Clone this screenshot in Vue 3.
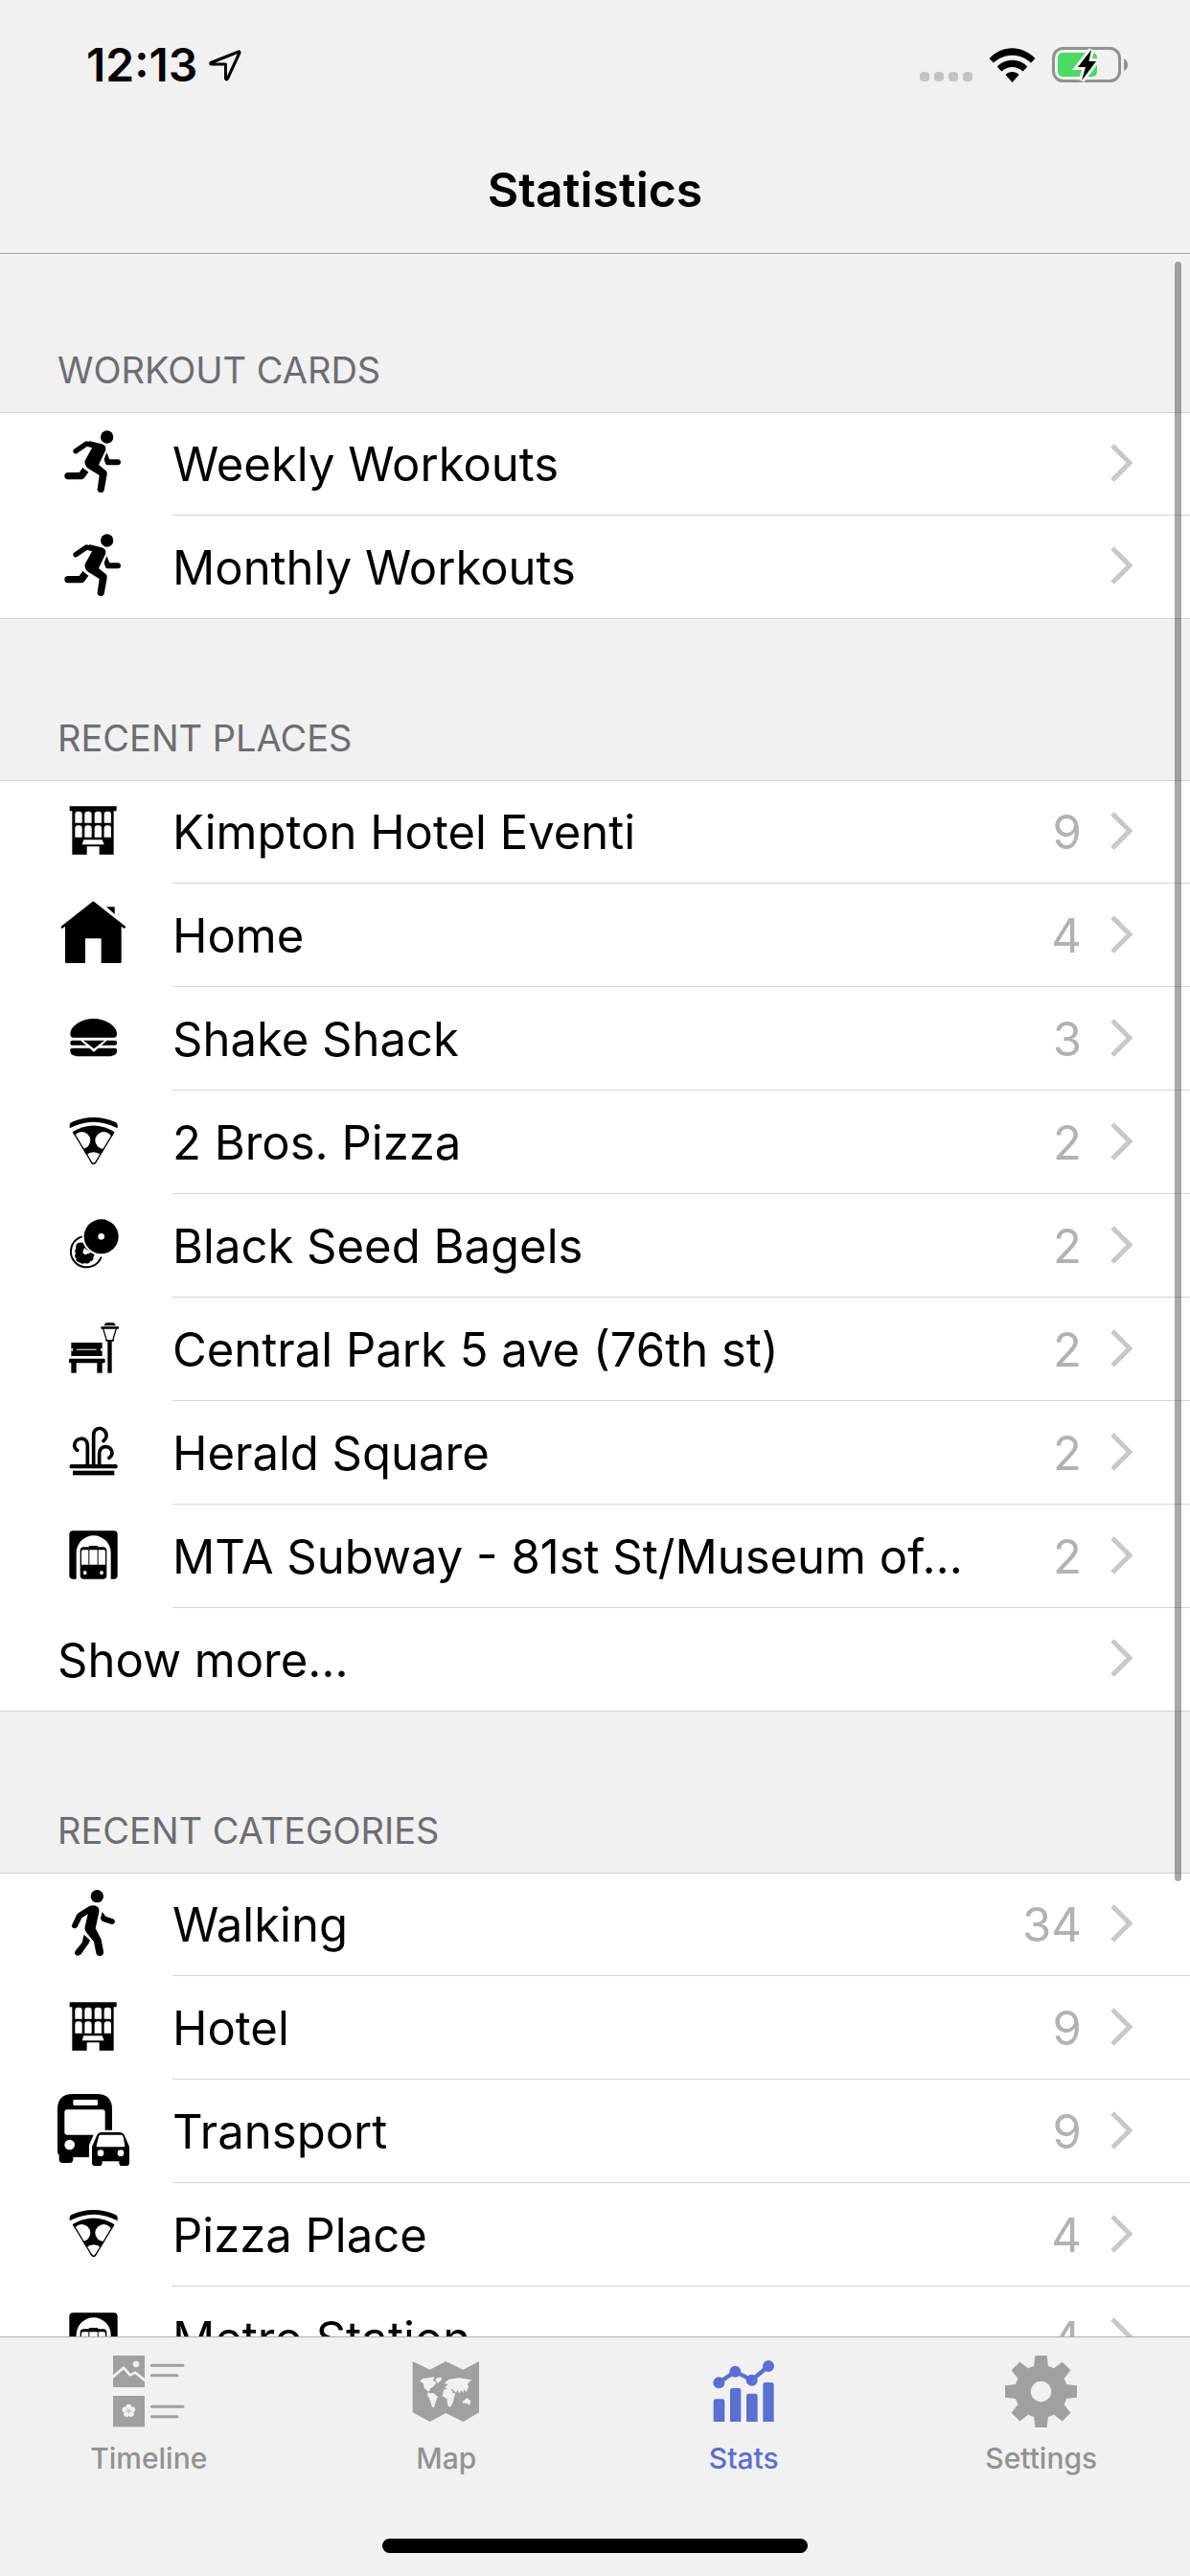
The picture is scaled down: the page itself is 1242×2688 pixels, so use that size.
<script setup>
import { h } from 'vue'

const sections = [
  {
    title: 'Workout Cards',
    rows: [
      { icon: 'run', label: 'Weekly Workouts' },
      { icon: 'run', label: 'Monthly Workouts' },
    ],
  },
  {
    title: 'Recent Places',
    rows: [
      { icon: 'hotel', label: 'Kimpton Hotel Eventi', count: 9 },
      { icon: 'home', label: 'Home', count: 4 },
      { icon: 'burger', label: 'Shake Shack', count: 3 },
      { icon: 'pizza', label: '2 Bros. Pizza', count: 2 },
      { icon: 'bagel', label: 'Black Seed Bagels', count: 2 },
      { icon: 'park', label: 'Central Park 5 ave (76th st)', count: 2 },
      { icon: 'fountain', label: 'Herald Square', count: 2 },
      { icon: 'metro', label: 'MTA Subway - 81st St/Museum of…', count: 2 },
      { label: 'Show more…' },
    ],
  },
  {
    title: 'Recent Categories',
    rows: [
      { icon: 'walk', label: 'Walking', count: 34 },
      { icon: 'hotel', label: 'Hotel', count: 9 },
      { icon: 'transport', label: 'Transport', count: 9 },
      { icon: 'pizza', label: 'Pizza Place', count: 4 },
      { icon: 'metro', label: 'Metro Station', count: 4 },
    ],
  },
]

const tabs = [
  { icon: 'timeline', label: 'Timeline' },
  { icon: 'map', label: 'Map' },
  { icon: 'stats', label: 'Stats', active: true },
  { icon: 'settings', label: 'Settings' },
]

// Shape helpers: k = solid, w = cut-out, s = stroked line, c = circle, r = rectangle
const k = (d) => h('path', { d })
const w = (d, fill = '#fff') => h('path', { d, fill })
const s = (d, width, stroke = 'currentColor', cap = 'round') =>
  h('path', { d, fill: 'none', stroke, 'stroke-width': width, 'stroke-linecap': cap, 'stroke-linejoin': 'round' })
const c = (cx, cy, r, fill = 'currentColor') => h('circle', { cx, cy, r, fill })
const r = (x, y, width, height, rx = 0, fill = 'currentColor') => h('rect', { x, y, width, height, rx, fill })

const bar = '#f1f1f1'
const archWindow = (x, y, height) => w(`M${x} ${y + height}v${9 - height}q0 -9 9 -9h4q9 0 9 9v${height - 9}z`)

const glyphs = {
  run: () => [
    c(155, 33, 20),
    s('M57 77L91 54L130 64', 16),
    k('M98 45L138 55Q155 60 150 76L129 120L152 139Q156 143 155 150L146 200Q144 208 134 207Q124 205 125 196L131 153L97 132Q83 122 86 107L109 65Z'),
    k('M33 144H68L79 129L97 143L84 161Q80 166 74 166H33Q22 165 22 155Q22 144 33 144Z'),
    k('M154 82L163 103H189Q198 104 198 112Q198 121 189 121H158Q151 121 149 113L146 102Z'),
  ],
  walk: () => [
    c(124, 29, 20),
    k('M45 120L59 89Q61 84 66 81L96 62Q102 58 113 58Q133 60 130 79L119 130L134 158Q137 163 138 170L144 202Q145 215 134 216Q123 217 121 207L114 172L91 143Q84 135 86 125L95 85L76 97L62 125Q57 131 50 129Q43 126 45 120Z'),
    k('M83 149L102 167Q98 178 93 183L74 210Q66 218 58 214Q51 208 56 200L77 174Z'),
    k('M140 78L151 92L174 100Q183 106 178 113Q175 118 167 116L144 109Q136 107 135 98Z'),
  ],
  hotel: () => [
    k('M38 37H185V52H176V188H131V163H92V188H46V52H38Z'),
    ...[55, 85, 116, 146].flatMap((x) => [archWindow(x, 53, 36), archWindow(x, 97, 37)]),
    w('M82 142H140L146 157H77Z'),
  ],
  home: () => [
    k('M112 10L214 90L210 96L200 89V201Q200 204 197 204H137V127H87V204H27Q24 204 24 201V89L14 96L10 90Z'),
    k('M153 28H179V51Z'),
  ],
  burger: () => [
    k('M113 54C150 54 186 76 186 102Q186 113 176 113H50Q40 113 40 102C40 76 76 54 113 54Z'),
    r(40, 122, 146, 15, 6),
    k('M40 151Q40 146 46 146H180Q186 146 186 151V158Q184 172 150 172H76Q42 172 40 158Z'),
    w('M73 120H154V123L114 158L73 123Z'),
    k('M81 122H147L114 148Z'),
  ],
  pizza: () => [
    k('M47 84Q113 45 178 84L121 180Q113 192 105 180Z'),
    c(76, 111, 27, '#fff'),
    c(145, 111, 27, '#fff'),
    w('M88 158Q113 138 138 158L114 183H112Z'),
    s('M50 86L107 180Q113 188 119 180L176 86', 4),
    k('M38 63Q38 57 44 54Q113 24 182 54Q188 57 188 63V73Q113 34 38 73Z'),
  ],
  bagel: () => [
    c(88, 137, 49, '#fff'),
    s('M90 86A49 49 0 1 0 136 154', 6),
    k('M64 108Q77 104 86 111L112 139Q120 143 112 152Q114 164 103 165Q98 176 86 171Q76 176 69 169Q57 168 58 156Q51 149 57 140Q52 132 58 125Q56 113 64 108Z'),
    w('M84 123L95 132L103 137L98 142Q93 140 89 145Q81 144 79 137Z'),
    c(137, 88, 60, '#fff'),
    c(137, 88, 54),
    c(137, 88, 10, '#fff'),
  ],
  park: () => [
    r(43, 96, 97, 42, 1),
    w('M43 114H48V122H43ZM59 116H122V119H59ZM135 114H140V122H135Z'),
    r(36, 146, 113, 14, 4),
    r(43, 158, 16, 33),
    r(124, 158, 16, 33),
    r(157, 90, 13, 101),
    r(151, 87, 26, 5),
    s('M143 52L153 86M184 52L174 86', 4),
    r(136, 46, 56, 7, 2),
    k('M153 34H175Q178 34 181 40L182 43H146L147 40Q150 34 153 34Z'),
  ],
  fountain: () => [
    s('M113 158V62C113 30 155 36 153 65Q152 73 144 80', 11),
    s('M94 158V93C94 64 53 67 53 95Q54 104 62 109', 11),
    s('M131 158V120C131 90 171 91 171 119Q170 127 162 133', 11),
    r(38, 153, 150, 13, 5),
    r(48, 173, 130, 14),
  ],
  metro: () => [
    r(37, 37, 151, 151, 12),
    w('M59 190V106A54 54 0 0 1 167 106V190Z'),
    r(71, 88, 83, 100, 11),
    r(98, 84, 29, 8, 3),
    w('M78 97H97V143H75V101ZM100 97H125V143H100ZM128 97H147L150 101V143H128Z'),
    r(81, 163, 10, 11, 3, '#fff'),
    r(133, 163, 10, 11, 3, '#fff'),
  ],
  transport: () => [
    k('M0 48Q0 0 48 0H123Q171 0 171 48V198H49V205Q49 216 38 216H16Q5 216 5 205V192Q0 188 0 180Z'),
    r(49, 18, 77, 18, 4, '#fff'),
    r(22, 49, 127, 79, 7, '#fff'),
    c(38, 159, 16, '#fff'),
    w('M99 200V160L112 130Q117 114 132 113H180V225H99Z'),
    k('M108 165L121 135Q126 120 138 120H194Q207 120 212 135L225 165V215Q225 225 215 225H202Q193 225 193 215V211H140V215Q140 225 131 225H118Q108 225 108 215Z'),
    w('M134 128H199Q204 128 206 134L211 162Q211 166 207 166H126Q121 166 122 162L129 134Q130 128 134 128Z'),
    c(135, 185, 10, '#fff'),
    c(198, 185, 10, '#fff'),
  ],
  timeline: () => [
    r(0, 0, 99, 99),
    c(72, 27, 10, bar),
    s('M-2 68L33 38L53 61L70 53L101 79', 8, bar, 'butt'),
    r(0, 126, 99, 97),
    ...[0, 72, 144, 216, 288].map((a) => h('circle', { cx: 49, cy: 161, r: 9, fill: bar, transform: `rotate(${a} 49 173)` })),
    c(49, 173, 10, bar),
    ...[36, 108, 180, 252, 324].map((a) => h('path', { d: 'M49 173V164', stroke: 'currentColor', 'stroke-width': 2, transform: `rotate(${a} 49 173)` })),
    s('M121 31H219M121 62H201M121 160H219M121 191H201', 9),
  ],
  map: () => [
    k('M8 18L62 44L112 18L166 44L216 18V178L166 207L112 180L62 207L8 178Z'),
    w('M30 81L40 72L76 67L72 78L83 84L74 96L62 104V111L56 112L60 118L72 117L87 128L80 145L76 161H69L62 138L54 124L57 113L44 101L41 86Z', bar),
    w('M84 70L99 68L97 78L87 86L80 77Z', bar),
    w('M107 88L121 74L153 70L193 76L180 88L183 98L176 114L169 106L166 117L160 108L155 118L148 108L144 116L132 105L122 104L107 99L120 90Z', bar),
    w('M105 108L119 101L130 107L134 116L142 119L138 131L134 148L125 162L118 156L115 135L101 127Z', bar),
    w('M164 144L180 131L183 138L190 141L186 156L178 149L165 149Z', bar),
  ],
  stats: () => [
    k('M17 207V143Q17 136 24 136H45Q52 136 52 143V207ZM69 207V109Q69 102 76 102H96Q103 102 103 109V207ZM120 207V126Q120 119 127 119H148Q155 119 155 126V207ZM172 207V91Q172 84 179 84H199Q206 84 206 91V207Z'),
    s('M34 85L85 50L137 77L189 33', 13),
    c(34, 85, 18),
    c(85, 50, 18),
    c(137, 77, 18),
    c(189, 33, 18),
  ],
  settings: () => [
    ...[0, 45, 90, 135, 180, 225, 270, 315].map((a) =>
      h('path', { d: 'M94 0H131L136 42H89Z', transform: `rotate(${a} 112.5 112.5)` })),
    c(112.5, 112.5, 83),
    c(112.5, 112.5, 32, bar),
  ],
}

const Glyph = (props) =>
  h('svg', { viewBox: '0 0 225 225', width: 75, height: 75, fill: 'currentColor', 'aria-hidden': 'true' }, glyphs[props.name]())
Glyph.props = ['name']
</script>

<template>
  <div class="screen">
    <header class="top">
      <div class="status">
        <span class="time">12:13</span>
        <svg class="locate" width="34" height="34" viewBox="0 0 34 34" aria-hidden="true">
          <path d="M31 3L2 14.500Q1 16 3 16H17.500L17.500 31Q18.500 33 19.500 31L32 4Q32 2.500 31 3Z" fill="none" stroke="#000" stroke-width="3" stroke-linejoin="round" />
        </svg>
        <div class="signal"><i v-for="n in 4" :key="n"></i></div>
        <svg class="wifi" width="49" height="36" viewBox="0 0 49 36" aria-hidden="true">
          <path d="M.5 11C14-3.500 34.500-3.500 48.500 11L44 15.500C33 5 16 5 5 15.500ZM8.700 19.500C17 10.500 32 10.500 40.300 19.500L35.700 24.500C29 18.500 20 18.500 13.300 24.500ZM17.500 28C21 24 28 24 31.500 28L24.500 36Z" />
        </svg>
        <svg width="79" height="37" viewBox="0 0 79 37" aria-hidden="true">
          <rect x="1.500" y="1.500" width="69" height="34" rx="10" fill="none" stroke="#919191" stroke-width="3" />
          <rect x="6" y="6" width="41" height="25" rx="5" fill="#4cd964" />
          <path d="M75 12Q79 14 79 18.500T75 25Z" fill="#919191" />
          <path d="M41 3L27 21H35L31 35L46 15H38.500Z" fill="#000" stroke="#f1f1f1" stroke-width="6" paint-order="stroke" />
        </svg>
      </div>
      <h1>Statistics</h1>
    </header>

    <main class="content">
      <section v-for="section in sections" :key="section.title">
        <h2>{{ section.title }}</h2>
        <ul>
          <li v-for="row in section.rows" :key="row.label">
            <a href="#" class="row">
              <Glyph v-if="row.icon" :name="row.icon" class="icon" />
              <span class="cell">
                <span class="label">{{ row.label }}</span>
                <span v-if="row.count" class="count">{{ row.count }}</span>
                <svg class="chevron" width="24" height="40" viewBox="0 0 24 40" aria-hidden="true">
                  <path d="M2 2L20 20L2 38" fill="none" stroke="#c7c7cc" stroke-width="5" />
                </svg>
              </span>
            </a>
          </li>
        </ul>
      </section>
      <div class="scrollbar"></div>
    </main>

    <footer class="bottom">
      <nav>
        <a v-for="tab in tabs" :key="tab.label" href="#" :class="['tab', { active: tab.active }]">
          <Glyph :name="tab.icon" class="tab-icon" />
          <span>{{ tab.label }}</span>
        </a>
      </nav>
      <div class="home-indicator"></div>
    </footer>
  </div>
</template>

<style>
body {
  background: #f1f1f1;
}
</style>

<style scoped>
.screen {
  display: flex;
  flex-direction: column;
  height: 100vh;
  overflow: hidden;
  background: #f1f1f1;
  color: #000;
  font-family: Inter, "Liberation Sans", sans-serif;
}

a {
  color: inherit;
  text-decoration: none;
}

svg {
  display: block;
  flex: none;
}

.top {
  flex: none;
  border-bottom: 1px solid #a9a9ab;
}

.status {
  display: flex;
  align-items: center;
  box-sizing: border-box;
  height: 132px;
  padding: 3px 65px 0 90px;
}

.time {
  font-size: 48px;
  font-weight: 600;
}

.locate {
  margin-left: 12px;
}

.signal {
  display: flex;
  gap: 5px;
  margin-left: auto;
  padding-top: 25px;
}

.signal i {
  width: 10px;
  height: 10px;
  border-radius: 4px;
  background: #c3c3c3;
}

.wifi {
  margin: 0 17px;
}

h1 {
  margin: 0;
  font-size: 50px;
  font-weight: 600;
  line-height: 132px;
  text-align: center;
}

.content {
  position: relative;
  flex: 1;
  min-height: 0;
  overflow: hidden;
}

h2 {
  margin: 0;
  padding: 100px 60px 20px;
  color: #6d6d72;
  font-size: 38px;
  font-weight: 400;
  line-height: 48px;
  text-transform: uppercase;
}

section:first-child h2 {
  padding-top: 97px;
}

ul {
  position: relative;
  margin: 0;
  padding: 0;
  background: #fff;
  list-style: none;
}

ul::before {
  content: "";
  position: absolute;
  inset: 0 0 auto;
  border-top: 1px solid #d5d5d7;
}

.row {
  display: flex;
  height: 108px;
  padding-left: 60px;
}

.icon {
  margin: 15px 45px 0 0;
}

.cell {
  display: flex;
  flex: 1;
  align-items: center;
  box-sizing: border-box;
  min-width: 0;
  padding: 0 59px 2px 0;
  border-bottom: 1px solid #d5d5d7;
}

li:last-child .row {
  border-bottom: 1px solid #d5d5d7;
  height: 107px;
}

li:last-child .cell {
  border-bottom-color: transparent;
}

.label,
.count {
  padding-top: 5px;
  font-size: 49px;
  line-height: 60px;
  white-space: nowrap;
}

.label {
  flex: 1;
}

.count {
  color: #b2b2b2;
}

.chevron {
  margin-left: 30px;
}

.scrollbar {
  position: absolute;
  top: 8px;
  right: 9px;
  bottom: 475px;
  width: 7px;
  border-radius: 4px;
  background: rgba(0, 0, 0, 0.34);
}

.bottom {
  display: flex;
  flex: none;
  flex-direction: column;
  align-items: center;
  justify-content: space-between;
  box-sizing: border-box;
  height: 250px;
  padding: 19px 0 24px;
  border-top: 1px solid #b0b0b0;
}

nav {
  display: flex;
  align-self: stretch;
}

.tab {
  display: flex;
  flex: 1;
  flex-direction: column;
  align-items: center;
  gap: 14px;
  color: #929292;
  font-size: 30px;
  font-weight: 500;
  line-height: 36px;
}

.tab-icon {
  color: #a0a0a0;
}

.active,
.active .tab-icon {
  color: #5a6fcf;
}

.home-indicator {
  width: 444px;
  height: 15px;
  border-radius: 8px;
  background: #000;
}
</style>
